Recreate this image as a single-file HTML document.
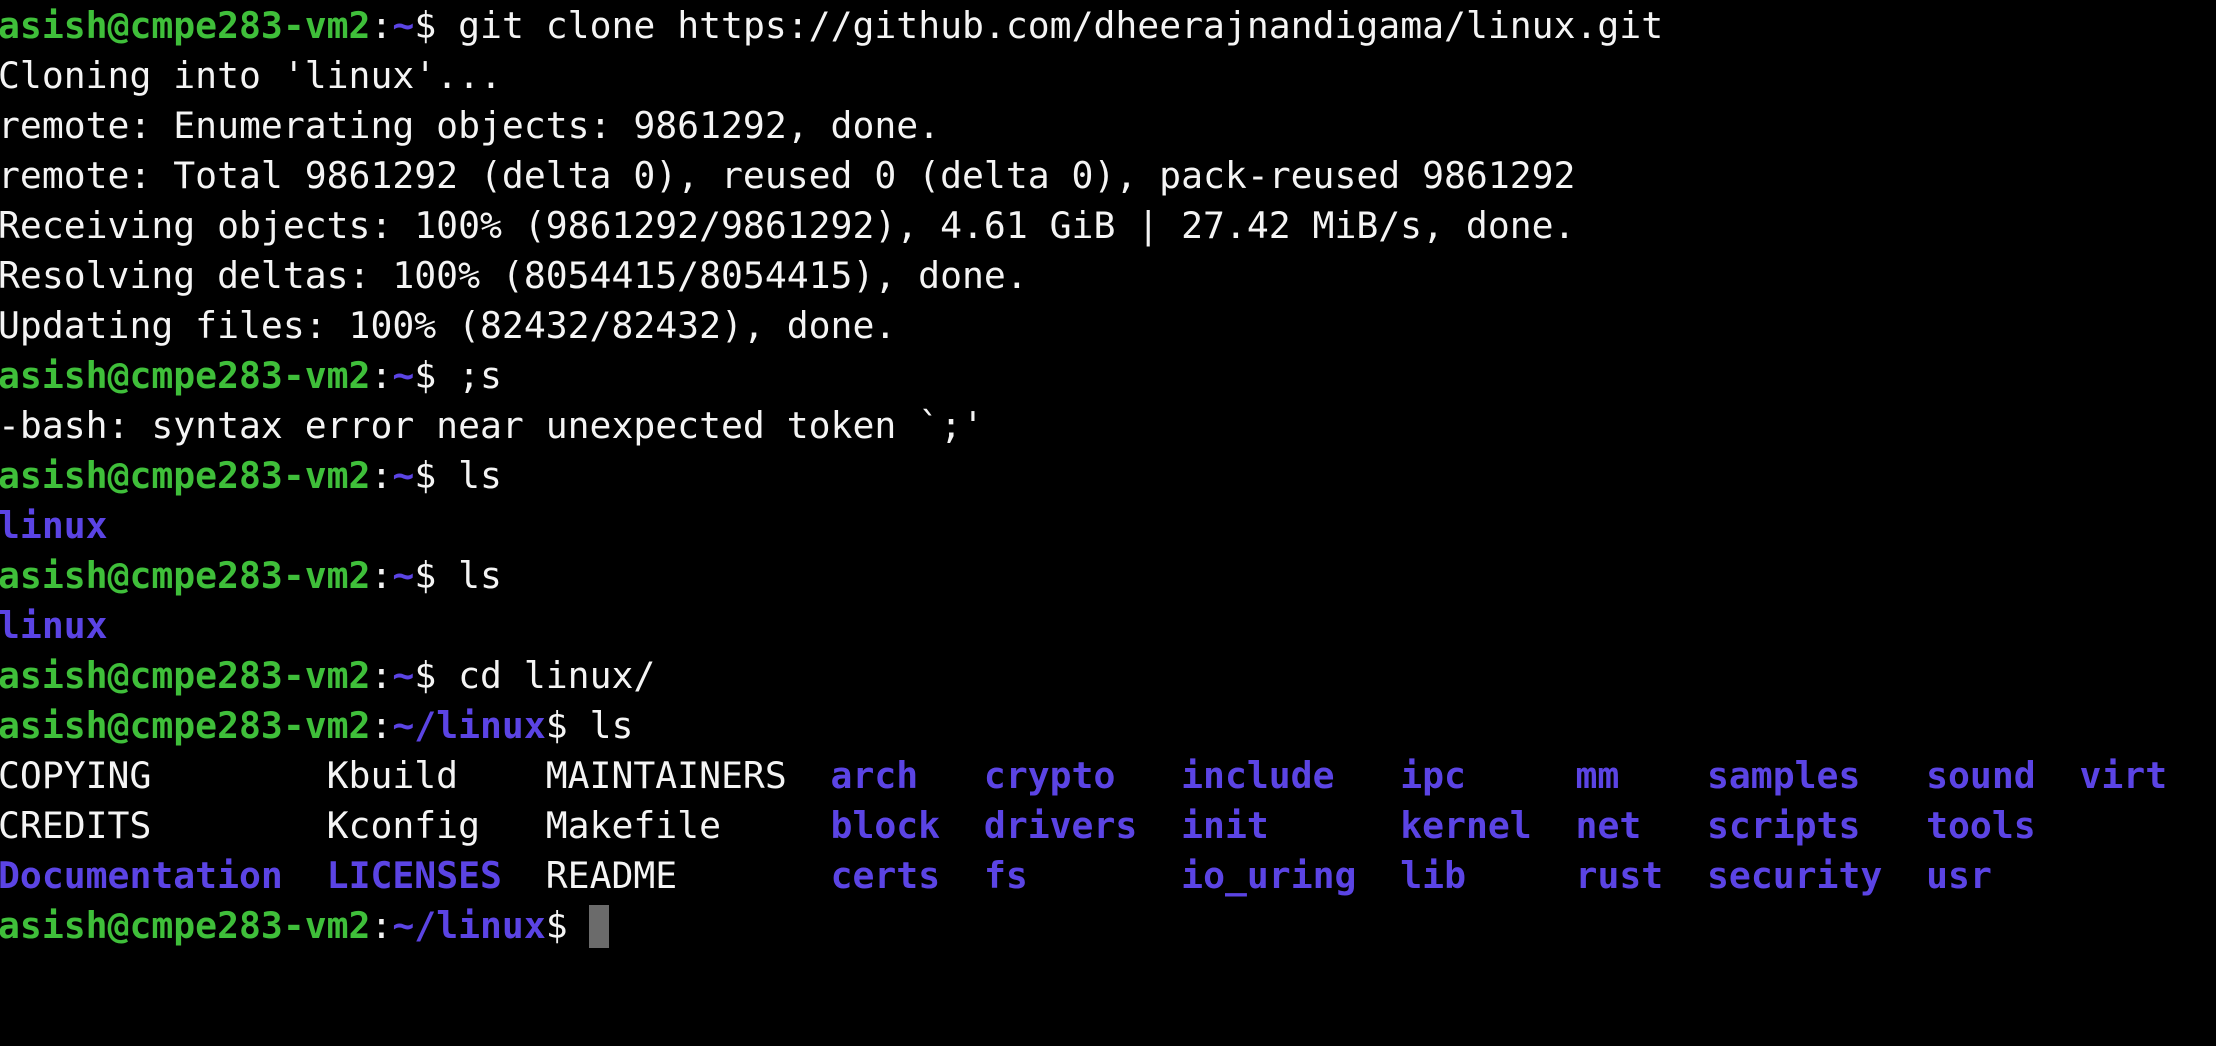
<!DOCTYPE html>
<html><head><meta charset="utf-8"><style>
html,body{margin:0;padding:0;background:#000;width:2216px;height:1046px;overflow:hidden}
pre{margin:0;padding:0;position:absolute;left:-2px;top:1px;font-family:"DejaVu Sans Mono","Liberation Mono",monospace;font-size:36.4px;line-height:50px;color:#f4f4f4;letter-spacing:0}
.g{color:#3fbf3a;font-weight:bold}
.b{color:#5b44e4;font-weight:bold}
.c{position:absolute;left:589px;top:905px;width:20px;height:43px;background:#6b6b6b}
</style></head><body>
<pre><span class="g">asish@cmpe283-vm2</span>:<span class="b">~</span>$ git clone https://github.com/dheerajnandigama/linux.git
Cloning into 'linux'...
remote: Enumerating objects: 9861292, done.
remote: Total 9861292 (delta 0), reused 0 (delta 0), pack-reused 9861292
Receiving objects: 100% (9861292/9861292), 4.61 GiB | 27.42 MiB/s, done.
Resolving deltas: 100% (8054415/8054415), done.
Updating files: 100% (82432/82432), done.
<span class="g">asish@cmpe283-vm2</span>:<span class="b">~</span>$ ;s
-bash: syntax error near unexpected token `;'
<span class="g">asish@cmpe283-vm2</span>:<span class="b">~</span>$ ls
<span class="b">linux</span>
<span class="g">asish@cmpe283-vm2</span>:<span class="b">~</span>$ ls
<span class="b">linux</span>
<span class="g">asish@cmpe283-vm2</span>:<span class="b">~</span>$ cd linux/
<span class="g">asish@cmpe283-vm2</span>:<span class="b">~/linux</span>$ ls
COPYING        Kbuild    MAINTAINERS  <span class="b">arch</span>   <span class="b">crypto</span>   <span class="b">include</span>   <span class="b">ipc</span>     <span class="b">mm</span>    <span class="b">samples</span>   <span class="b">sound</span>  <span class="b">virt</span>
CREDITS        Kconfig   Makefile     <span class="b">block</span>  <span class="b">drivers</span>  <span class="b">init</span>      <span class="b">kernel</span>  <span class="b">net</span>   <span class="b">scripts</span>   <span class="b">tools</span>
<span class="b">Documentation</span>  <span class="b">LICENSES</span>  README       <span class="b">certs</span>  <span class="b">fs</span>       <span class="b">io_uring</span>  <span class="b">lib</span>     <span class="b">rust</span>  <span class="b">security</span>  <span class="b">usr</span>
<span class="g">asish@cmpe283-vm2</span>:<span class="b">~/linux</span>$ </pre>
<div class="c"></div>
</body></html>
